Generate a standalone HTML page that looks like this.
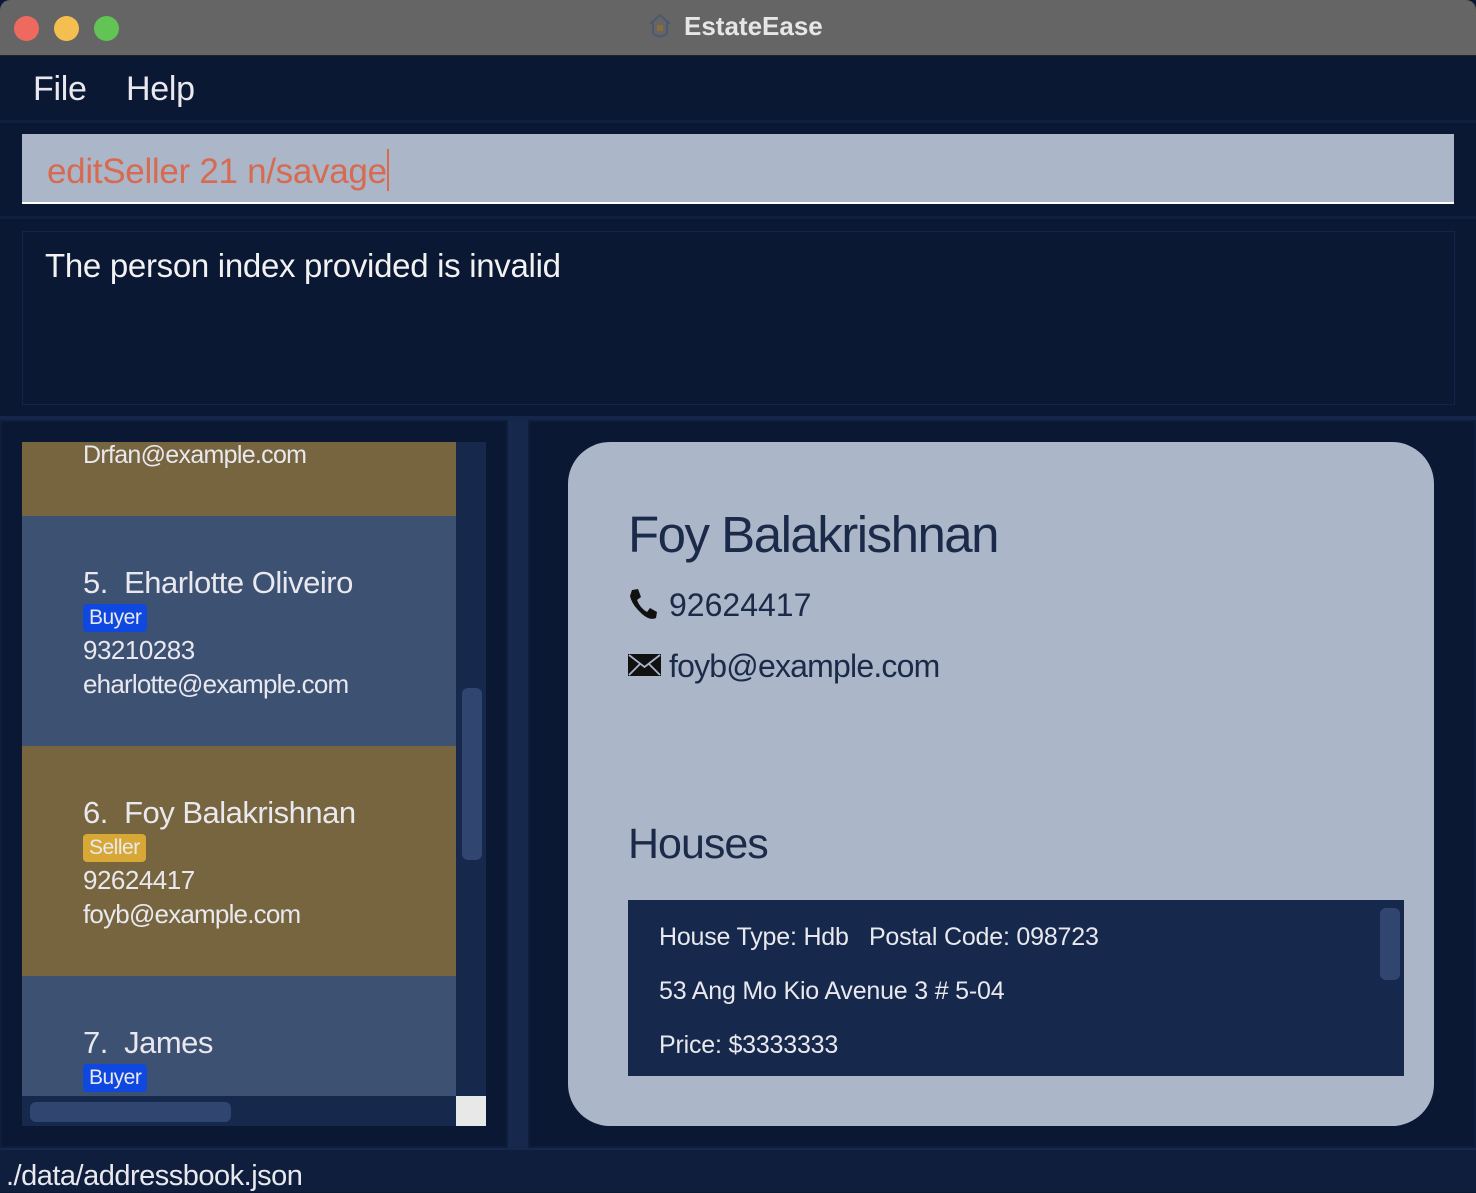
<!DOCTYPE html>
<html><head><style>
*{margin:0;padding:0;box-sizing:border-box}
body{width:1476px;height:1192px;background:#0b1833;font-family:"Liberation Sans",sans-serif;position:relative;overflow:hidden;color:#e8e8ee}
.a{position:absolute}
.dot{position:absolute;top:16px;width:25px;height:25px;border-radius:50%}
.card{position:absolute;left:22px;width:434px}
.t{position:absolute;left:61px;white-space:nowrap;letter-spacing:-0.5px}
.tag{display:inline-block;font-size:21px;padding:2px 6px;border-radius:4px}
</style></head><body>
<div class="a" style="left:0;top:0;width:1476px;height:56px;background:#656565;border-bottom:1px solid #222;border-radius:10px 10px 0 0"></div>
<div class="dot" style="left:14px;background:#ee6a5e"></div>
<div class="dot" style="left:54px;background:#f5bf4f"></div>
<div class="dot" style="left:94px;background:#61c454"></div>
<svg class="a" style="left:648px;top:13px" width="24" height="28" viewBox="0 0 24 28"><path d="M2 11 L12 2 L22 11 M5 9 V20 Q12 27 19 20 V9" fill="none" stroke="#4b5a70" stroke-width="2"/><rect x="9" y="12" width="6" height="6" fill="#8a6d3b"/></svg>
<div class="a" style="left:684px;top:11px;font-size:26px;font-weight:bold;color:#e6e6e6">EstateEase</div>

<div class="a" style="left:33px;top:70px;font-size:34px;letter-spacing:-0.3px">File</div>
<div class="a" style="left:126px;top:70px;font-size:34px;letter-spacing:-0.3px">Help</div>
<div class="a" style="left:0;top:120px;width:1476px;height:3px;background:#0f1f3d"></div>

<div class="a" style="left:22px;top:134px;width:1432px;height:70px;background:#abb6c9;border-bottom:2px solid #fff"></div>
<div class="a" style="left:47px;top:149px;font-size:35px;color:#d76a4f;letter-spacing:-0.3px">editSeller 21 n/savage<span style="display:inline-block;width:2px;height:42px;background:#d76a4f;vertical-align:-8px"></span></div>
<div class="a" style="left:0;top:216px;width:1476px;height:3px;background:#0f1f3d"></div>

<div class="a" style="left:22px;top:231px;width:1433px;height:174px;border:1px solid #132448"></div>
<div class="a" style="left:45px;top:247px;font-size:33px;letter-spacing:-0.3px;color:#f2f2f2">The person index provided is invalid</div>
<div class="a" style="left:0;top:416px;width:1476px;height:4px;background:#14264a"></div>

<div class="a" style="left:0;top:420px;width:508px;height:728px;border:2px solid #0e1d3b"></div>
<div class="a" style="left:508px;top:420px;width:20px;height:728px;background:#16284b"></div>
<div class="a" style="left:22px;top:442px;width:464px;height:684px;background:#16284b"></div>

<div class="card" style="top:442px;height:74px;background:#76653e"><div class="t" style="top:-1px;font-size:25px;letter-spacing:-0.7px">Drfan@example.com</div></div>
<div class="card" style="top:516px;height:230px;background:#3d5172">
<div class="t" style="top:49px;font-size:31px">5.&nbsp; Eharlotte Oliveiro</div>
<div class="t" style="top:88px"><span class="tag" style="background:#0e48e0">Buyer</span></div>
<div class="t" style="top:119px;font-size:26px">93210283</div>
<div class="t" style="top:153px;font-size:26px;letter-spacing:-0.8px">eharlotte@example.com</div></div>
<div class="card" style="top:746px;height:230px;background:#76653e">
<div class="t" style="top:49px;font-size:31px">6.&nbsp; Foy Balakrishnan</div>
<div class="t" style="top:88px"><span class="tag" style="background:#d8a836">Seller</span></div>
<div class="t" style="top:119px;font-size:26px">92624417</div>
<div class="t" style="top:153px;font-size:26px;letter-spacing:-0.8px">foyb@example.com</div></div>
<div class="card" style="top:976px;height:120px;background:#3d5172">
<div class="t" style="top:49px;font-size:31px">7.&nbsp; James</div>
<div class="t" style="top:88px"><span class="tag" style="background:#0e48e0">Buyer</span></div></div>
<div class="a" style="left:462px;top:688px;width:20px;height:172px;border-radius:6px;background:#304670"></div>
<div class="a" style="left:30px;top:1102px;width:201px;height:20px;border-radius:6px;background:#304670"></div>
<div class="a" style="left:456px;top:1096px;width:30px;height:30px;background:#e8e8e8"></div>

<div class="a" style="left:528px;top:420px;width:948px;height:728px;border:2px solid #0e1d3b"></div>
<div class="a" style="left:568px;top:442px;width:866px;height:684px;background:#abb6c9;border-radius:42px"></div>
<div class="a" style="left:628px;top:505px;font-size:51px;color:#1b2a48;letter-spacing:-1.5px">Foy Balakrishnan</div>
<svg class="a" style="left:628px;top:588px" width="30" height="32" viewBox="0 0 30 32"><path d="M4 2 L10 1 L13 9 L9 12 Q12 20 19 24 L22 20 L29 24 L28 30 Q22 33 14 26 Q4 17 2 8 Z" fill="#111"/></svg>
<div class="a" style="left:669px;top:587px;font-size:32px;color:#1b2a48">92624417</div>
<svg class="a" style="left:628px;top:654px" width="33" height="22" viewBox="0 0 33 22"><rect width="33" height="22" fill="#111"/><path d="M1 1 L16.5 13 L32 1 M1 21 L12 10 M32 21 L21 10" fill="none" stroke="#abb6c9" stroke-width="1.8"/></svg>
<div class="a" style="left:669px;top:648px;font-size:32px;color:#1b2a48;letter-spacing:-0.8px">foyb@example.com</div>
<div class="a" style="left:628px;top:820px;font-size:43px;color:#1b2a48;letter-spacing:-1px">Houses</div>
<div class="a" style="left:628px;top:900px;width:776px;height:176px;background:#16284b"></div>
<div class="a" style="left:1380px;top:908px;width:20px;height:72px;border-radius:6px;background:#304670"></div>
<div class="a" style="left:659px;top:923px;font-size:25px;letter-spacing:-0.2px">House Type: Hdb &nbsp;&nbsp;Postal Code: 098723</div>
<div class="a" style="left:659px;top:977px;font-size:25px;letter-spacing:-0.2px">53 Ang Mo Kio Avenue 3 # 5-04</div>
<div class="a" style="left:659px;top:1031px;font-size:25px;letter-spacing:-0.2px">Price: $3333333</div>

<div class="a" style="left:0;top:1148px;width:1476px;height:44px;background:#0f1e3c;border-top:2px solid #16284b"></div>
<div class="a" style="left:6px;top:1160px;font-size:29px;letter-spacing:-0.5px">./data/addressbook.json</div>
</body></html>
